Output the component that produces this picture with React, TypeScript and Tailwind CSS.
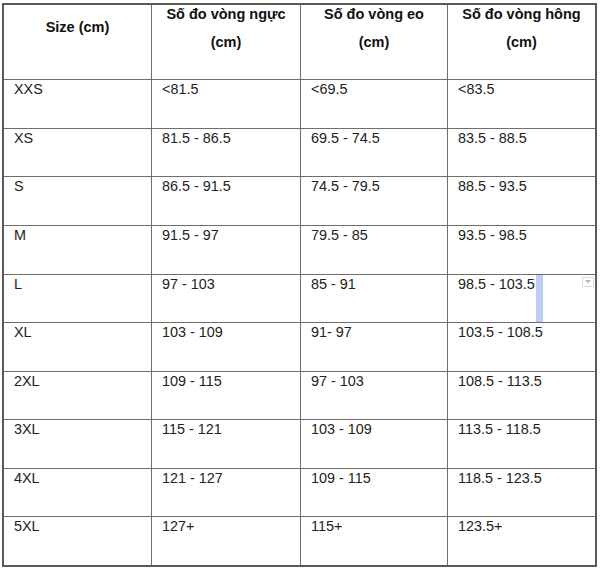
import React from "react";

const rows: [string, string, string, string][] = [
  ["XXS", "<81.5", "<69.5", "<83.5"],
  ["XS", "81.5 - 86.5", "69.5 - 74.5", "83.5 - 88.5"],
  ["S", "86.5 - 91.5", "74.5 - 79.5", "88.5 - 93.5"],
  ["M", "91.5 - 97", "79.5 - 85", "93.5 - 98.5"],
  ["L", "97 - 103", "85 - 91", "98.5 - 103.5"],
  ["XL", "103 - 109", "91- 97", "103.5 - 108.5"],
  ["2XL", "109 - 115", "97 - 103", "108.5 - 113.5"],
  ["3XL", "115 - 121", "103 - 109", "113.5 - 118.5"],
  ["4XL", "121 - 127", "109 - 115", "118.5 - 123.5"],
  ["5XL", "127+", "115+", "123.5+"],
];

const headers = ["Số đo vòng ngực", "Số đo vòng eo", "Số đo vòng hông"];

export default function App() {
  return (
    <div
      className="w-[600px] h-[568px] bg-white overflow-hidden"
      style={{ fontFamily: '"Liberation Sans", Arial, sans-serif' }}
    >
      <div className="ml-[2px] mt-[3px] w-[595px] border-2 border-[#5a5a5a] bg-[#6e6e6e]">
        <div className="grid grid-cols-[147px_148px_146px_147px] grid-rows-[74px_48px_47px_48px_48px_47px_48px_47px_48px_47px_48px] gap-px">
          <div className="bg-white pt-[13px] text-center text-[14.5px] font-bold leading-[18px] text-[#111]">
            Size (cm)
          </div>
          {headers.map((h) => (
            <div
              key={h}
              className="bg-white text-center text-[14.5px] font-bold leading-[18px] text-[#111]"
            >
              <div>{h}</div>
              <div className="mt-[10px]">(cm)</div>
            </div>
          ))}
          {rows.map((r, i) =>
            r.map((c, j) => (
              <div
                key={`${i}-${j}`}
                className="relative bg-white pl-[10px] text-[14.4px] leading-[18px] text-[#222]"
              >
                {c}
                {i === 4 && j === 3 && (
                  <>
                    <span className="absolute top-0 bottom-0 left-[88px] w-[7px] bg-[#b9cff5]" />
                    <span className="absolute right-[1px] top-[2px] flex h-[10px] w-[12px] items-center justify-center border border-[#dcdcdc] bg-white">
                      <svg width="6" height="4" viewBox="0 0 6 4">
                        <path d="M0 0 L6 0 L3 3.5 Z" fill="#b5b5b5" />
                      </svg>
                    </span>
                  </>
                )}
              </div>
            ))
          )}
        </div>
      </div>
    </div>
  );
}
